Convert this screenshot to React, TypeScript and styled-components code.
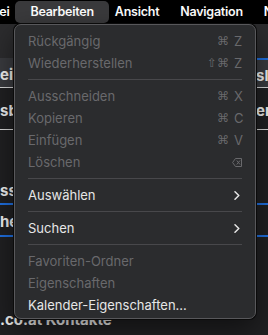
import React from "react";
import styled, { createGlobalStyle, css } from "styled-components";

const GlobalStyle = createGlobalStyle`
  html, body {
    margin: 0;
    padding: 0;
    background: #202022;
  }
  body {
    font-family: "Inter", "Noto Sans", "DejaVu Sans", sans-serif;
    -webkit-font-smoothing: antialiased;
  }
`;

const Screen = styled.div`
  position: relative;
  width: 268px;
  height: 335px;
  overflow: hidden;
  background: #202022;
  display: flex;
  flex-direction: column;
`;

// --- menu bar
const MenuBar = styled.nav`
  flex: none;
  height: 24px;
  background: #000;
  display: flex;
  align-items: center;
  margin-left: -31px;
  color: #fff;
  font-size: 12.5px;
  font-weight: 600;
  letter-spacing: -0.25px;
`;

const BarItem = styled.div<{ $active?: boolean }>`
  position: relative;
  padding: 0 10.5px;
  line-height: 22px;
  white-space: nowrap;
  span {
    position: relative;
  }
  ${({ $active }) =>
    $active &&
    css`
      &::before {
        content: "";
        position: absolute;
        top: 0;
        bottom: 0;
        left: -5px;
        right: -5px;
        background: #3a3a3c;
        border-radius: 5px;
      }
    `}
`;

// --- window behind the menu
const Toolbar = styled.div`
  flex: none;
  height: 34px;
  background: #2c2c2e;
`;

const ListRow = styled.div<{ $bg?: string; $h: number; $line?: string; $lineW?: number }>`
  flex: none;
  height: ${(p) => p.$h}px;
  box-sizing: border-box;
  display: flex;
  align-items: center;
  justify-content: space-between;
  background: ${(p) => p.$bg || "transparent"};
  border-bottom: ${(p) => (p.$line ? `${p.$lineW || 1}px solid ${p.$line}` : "none")};
  color: #f2f2f2;
  font-size: 15px;
  font-weight: 700;
  white-space: nowrap;
  overflow: hidden;
`;

const Cell = styled.span<{ $right?: boolean; $top?: string }>`
  width: ${(p) => (p.$right ? "12px" : "auto")};
  align-self: stretch;
  display: flex;
  align-items: center;
  padding-top: 3px;
  box-sizing: border-box;
  border-top: ${(p) => (p.$top ? `2px solid ${p.$top}` : "none")};
  overflow: hidden;
`;

const Spacer = styled.div<{ $h: number }>`
  flex: none;
  height: ${(p) => p.$h}px;
`;

const Footer = styled.div`
  flex: none;
  color: #f2f2f2;
  font-size: 15px;
  font-weight: 700;
  line-height: 18px;
  white-space: nowrap;
`;

// --- dropdown
const Dropdown = styled.div`
  position: absolute;
  top: 24px;
  left: 14px;
  width: 242px;
  box-sizing: border-box;
  padding: 5px 0 2px;
  background: #2b2c2e;
  border: 1px solid #58585b;
  border-radius: 7px;
  box-shadow: 0 0 0 1px #0b0b0b, 0 10px 28px rgba(0, 0, 0, 0.5);
  z-index: 2;
`;

const Item = styled.div<{ $disabled?: boolean }>`
  display: flex;
  align-items: center;
  justify-content: space-between;
  height: 22px;
  padding: 0 13px;
  font-size: 13px;
  color: ${(p) => (p.$disabled ? "#69696c" : "#e6e6e6")};
  white-space: nowrap;
`;

const Separator = styled.div`
  height: 11px;
  display: flex;
  align-items: center;
  padding: 0 13px;
  &::after {
    content: "";
    flex: 1;
    height: 1px;
    background: #48484b;
  }
`;

const Shortcut = styled.span`
  display: flex;
  align-items: center;
  gap: 5px;
  font-family: "DejaVu Sans", "Inter", sans-serif;
  font-size: 12px;
`;

const Key = styled.span`
  width: 8px;
  font-family: "Inter", sans-serif;
  font-size: 13px;
`;

const Chevron = () => (
  <svg width="6" height="9" viewBox="0 0 6 9" style={{ marginRight: 2 }}>
    <path d="M1 0.8 L4.8 4.5 L1 8.2" fill="none" stroke="#e6e6e6" strokeWidth="1.5" strokeLinecap="round" strokeLinejoin="round" />
  </svg>
);

const DeleteIcon = () => (
  <svg width="10" height="9" viewBox="0 0 10 9">
    <path d="M3.5 0.5 H9.5 V8.5 H3.5 L0.6 4.5 Z" fill="none" stroke="#69696c" strokeWidth="1" strokeLinejoin="round" />
    <path d="M5 2.8 L7.8 6.2 M7.8 2.8 L5 6.2" stroke="#69696c" strokeWidth="1" strokeLinecap="round" />
  </svg>
);

type Entry =
  | { sep: true }
  | { label: string; disabled?: boolean; mods?: string; keyName?: string; sub?: boolean; del?: boolean };

const entries: Entry[] = [
  { label: "Rückgängig", disabled: true, mods: "⌘", keyName: "Z" },
  { label: "Wiederherstellen", disabled: true, mods: "⇧⌘", keyName: "Z" },
  { sep: true },
  { label: "Ausschneiden", disabled: true, mods: "⌘", keyName: "X" },
  { label: "Kopieren", disabled: true, mods: "⌘", keyName: "C" },
  { label: "Einfügen", disabled: true, mods: "⌘", keyName: "V" },
  { label: "Löschen", disabled: true, del: true },
  { sep: true },
  { label: "Auswählen", sub: true },
  { sep: true },
  { label: "Suchen", sub: true },
  { sep: true },
  { label: "Favoriten-Ordner", disabled: true },
  { label: "Eigenschaften", disabled: true },
  { label: "Kalender-Eigenschaften..." },
];

export default function App() {
  return (
    <>
      <GlobalStyle />
      <Screen>
        <MenuBar>
          <BarItem><span>Datei</span></BarItem>
          <BarItem $active><span>Bearbeiten</span></BarItem>
          <BarItem><span>Ansicht</span></BarItem>
          <BarItem><span>Navigation</span></BarItem>
          <BarItem><span>Nachrichten</span></BarItem>
        </MenuBar>

        <Toolbar />
        <ListRow $bg="#3a3b3f" $h={30} $line="#d8d8d8">
          <Cell>ein</Cell>
          <Cell $right $top="#1f6fe0">sl</Cell>
        </ListRow>
        <ListRow $h={42} $line="#d8d8d8">
          <Cell>sbu</Cell>
          <Cell $right>er</Cell>
        </ListRow>
        <Spacer $h={45} />
        <ListRow $h={30} $line="#1f6fe0" $lineW={2}>
          <Cell>ss</Cell>
          <Cell $right />
        </ListRow>
        <ListRow $h={32} $line="#1f6fe0" $lineW={2}>
          <Cell>he</Cell>
          <Cell $right />
        </ListRow>
        <Spacer $h={74} />
        <Footer>.co.at Kontakte</Footer>

        <Dropdown>
          {entries.map((e, i) =>
            "sep" in e ? (
              <Separator key={i} />
            ) : (
              <Item key={i} $disabled={e.disabled}>
                <span>{e.label}</span>
                {e.mods && (
                  <Shortcut>
                    <span>{e.mods}</span>
                    <Key>{e.keyName}</Key>
                  </Shortcut>
                )}
                {e.del && <DeleteIcon />}
                {e.sub && <Chevron />}
              </Item>
            )
          )}
        </Dropdown>
      </Screen>
    </>
  );
}
